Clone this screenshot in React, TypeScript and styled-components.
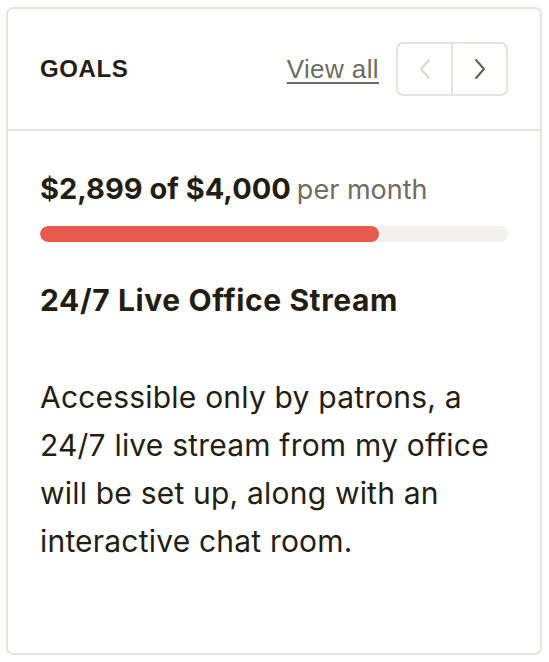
import { createGlobalStyle } from 'styled-components';
import styled from 'styled-components';

const GlobalStyle = createGlobalStyle`
  body {
    margin: 0;
    background: #ffffff;
    font-family: Inter, "Noto Sans", sans-serif;
    color: #241e12;
  }
`;

const Card = styled.section`
  margin: 7px 0 0 6px;
  width: 536px;
  height: 648px;
  box-sizing: border-box;
  border: 2px solid #e5e3dd;
  border-radius: 7px;
  background: #fff;
  display: flex;
  flex-direction: column;
`;

const Header = styled.header`
  height: 122px;
  box-sizing: border-box;
  padding: 0 32px 0 32px;
  display: flex;
  align-items: center;
  border-bottom: 2px solid #e5e3dd;
`;

const Heading = styled.h2`
  margin: 0;
  flex: 1;
  font-family: "Liberation Sans", Arial, sans-serif;
  font-weight: 700;
  font-size: 24px;
  letter-spacing: 0.6px;
  text-transform: uppercase;
`;

const ViewAll = styled.a`
  font-family: "Liberation Sans", Arial, sans-serif;
  font-size: 26px;
  letter-spacing: 0.4px;
  color: #6f6b63;
  text-decoration: underline;
  text-underline-offset: 4px;
  text-decoration-thickness: 2px;
  margin-right: 17px;
  cursor: pointer;
`;

const Pager = styled.div`
  display: flex;
  height: 54px;
  border: 2px solid #e5e3dd;
  border-radius: 7px;
  box-sizing: border-box;
  overflow: hidden;
`;

const PageBtn = styled.button<{ $disabled?: boolean }>`
  all: unset;
  width: 53px;
  display: flex;
  align-items: center;
  justify-content: center;
  color: ${(p) => (p.$disabled ? '#d9d7d0' : '#5f5b53')};
  cursor: ${(p) => (p.$disabled ? 'default' : 'pointer')};
  & + & {
    border-left: 2px solid #e5e3dd;
  }
`;

const Body = styled.div`
  padding: 40px 32px 0 32px;
`;

const Amount = styled.div`
  font-size: 29px;
  line-height: 36px;
  display: flex;
  align-items: baseline;
  gap: 6px;
`;

const Strong = styled.span`
  font-weight: 700;
  letter-spacing: 0px;
`;

const Muted = styled.span`
  color: #706c64;
  font-size: 27px;
  letter-spacing: 0px;
`;

const Track = styled.div`
  margin-top: 18px;
  height: 16px;
  border-radius: 8px;
  background: #f2f1ef;
  overflow: hidden;
`;

const Fill = styled.div`
  height: 100%;
  border-radius: 8px;
  background: #e65b4b;
`;

const Title = styled.h3`
  margin: 38px 0 0;
  font-size: 30px;
  font-weight: 700;
  line-height: 40px;
  letter-spacing: 0.6px;
`;

const Description = styled.p`
  margin: 53px 0 0;
  font-size: 30px;
  line-height: 48px;
  letter-spacing: 0.2px;
`;

const Chevron = ({ dir }: { dir: 'left' | 'right' }) => (
  <svg width="14" height="22" viewBox="0 0 14 22" fill="none">
    <path
      d={dir === 'left' ? 'M11 2 L3 11 L11 20' : 'M3 2 L11 11 L3 20'}
      stroke="currentColor"
      strokeWidth="2"
      strokeLinecap="round"
      strokeLinejoin="round"
    />
  </svg>
);

export default function App() {
  const raised = 2899;
  const goal = 4000;
  return (
    <>
      <GlobalStyle />
      <Card>
        <Header>
          <Heading>Goals</Heading>
          <ViewAll>View all</ViewAll>
          <Pager>
            <PageBtn $disabled>
              <Chevron dir="left" />
            </PageBtn>
            <PageBtn>
              <Chevron dir="right" />
            </PageBtn>
          </Pager>
        </Header>
        <Body>
          <Amount>
            <Strong>$2,899 of $4,000</Strong>
            <Muted>per month</Muted>
          </Amount>
          <Track>
            <Fill style={{ width: `${(raised / goal) * 100}%` }} />
          </Track>
          <Title>24/7 Live Office Stream</Title>
          <Description>
            Accessible only by patrons, a 24/7 live stream from my office will
            be set up, along with an interactive chat room.
          </Description>
        </Body>
      </Card>
    </>
  );
}
